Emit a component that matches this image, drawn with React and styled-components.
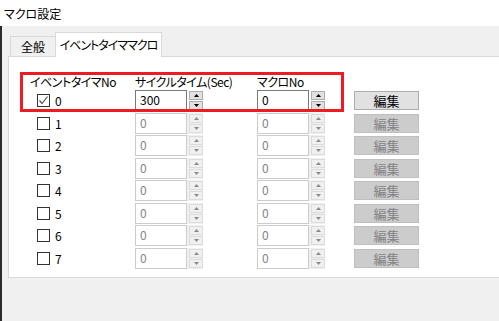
import React from 'react';
import styled, { createGlobalStyle } from 'styled-components';

const GlobalStyle = createGlobalStyle`
    body {
        margin: 0;
        background: #f0f0f0;
        font-family: 'Noto Sans CJK JP', 'Noto Sans', sans-serif;
        font-feature-settings: 'palt';
    }
`

const Window = styled.div`
    width: 499px;
    height: 321px;
    overflow: hidden;
    display: flex;
    flex-direction: column;
    background: #f0f0f0;
`
// タイトルバー
const TitleBar = styled.div`
    height: 26px;
    flex-shrink: 0;
    background: #ffffff;
    padding-left: 4px;
    display: flex;
    align-items: center;
    font-size: 12px;
    color: #000;
`
const Client = styled.div`
    flex: 1;
    border-left: 2px solid #2b2b2b;
    padding: 7px 0 0 6px;
    display: flex;
    flex-direction: column;
`
// タブ
const TabStrip = styled.div`
    height: 24px;
    display: flex;
    align-items: flex-end;
    padding-left: 2px;
    position: relative;
    z-index: 1;
    margin-bottom: -1px;
`
const Tab = styled.div`
    height: ${p => (p.$active ? '25px' : '21px')};
    box-sizing: border-box;
    width: ${p => p.$width}px;
    border: 1px solid #d9d9d9;
    border-bottom: ${p => (p.$active ? 'none' : '1px solid #d9d9d9')};
    margin-left: ${p => (p.$active ? '-1px' : '0')};
    background: ${p => (p.$active ? '#ffffff' : '#f0f0f0')};
    font-size: 12px;
    letter-spacing: ${p => (p.$active ? '-1px' : '0')};
    white-space: nowrap;
    display: flex;
    align-items: center;
    justify-content: center;
    padding-bottom: ${p => (p.$active ? '2px' : '0')};
`
const Panel = styled.div`
    width: 620px;
    height: 222px;
    box-sizing: border-box;
    background: #ffffff;
    border: 1px solid #d9d9d9;
    position: relative;
    padding: 17px 0 0 21px;
`
// 赤枠 (注釈)
const Highlight = styled.div`
    position: absolute;
    left: 11px;
    top: 15px;
    width: 324px;
    height: 40px;
    box-sizing: border-box;
    border: 3px solid #ed1c24;
    pointer-events: none;
`
const Grid = styled.div`
    display: grid;
    grid-template-columns: 105px 122px 97px 65px;
    grid-auto-rows: 21px;
    row-gap: 1.57px;
    align-items: center;
`
const HeaderRow = styled(Grid)`
    grid-auto-rows: 16px;
`
const HeaderCell = styled.div`
    font-size: 12px;
    line-height: 16px;
    letter-spacing: -0.5px;
    color: #000;
    white-space: nowrap;
`
const CheckCell = styled.label`
    display: flex;
    align-items: center;
    gap: 5px;
    padding-left: 7px;
    font-size: 12px;
    color: #000;
`
const CheckBox = styled.span`
    width: 13px;
    height: 13px;
    box-sizing: border-box;
    border: 1px solid #333333;
    background: #ffffff;
    display: flex;
    align-items: center;
    justify-content: center;
`
const Spin = styled.div`
    display: flex;
    height: 21px;
`
const TextBox = styled.div`
    width: 52px;
    height: 21px;
    box-sizing: border-box;
    border: 1px solid ${p => (p.$disabled ? '#cccccc' : '#7a7a7a')};
    padding: 1px 0 0 4px;
    font-size: 12px;
    line-height: 16px;
    color: ${p => (p.$disabled ? '#838383' : '#000')};
    background: #ffffff;
`
const SpinButtons = styled.div`
    width: 16px;
    box-sizing: border-box;
    padding: 1px 0 1px 2px;
    display: flex;
    flex-direction: column;
    gap: 1px;
    background: ${p => (p.$disabled ? '#f0f0f0' : '#ffffff')};
`
const SpinButton = styled.div`
    flex: 1;
    box-sizing: border-box;
    border: 1px solid ${p => (p.$disabled ? '#dcdcdc' : '#adadad')};
    background: ${p => (p.$disabled ? '#f0f0f0' : '#e1e1e1')};
    display: flex;
    align-items: center;
    justify-content: center;
`
const EditButton = styled.div`
    width: 65px;
    height: 19px;
    box-sizing: border-box;
    border: 1px solid ${p => (p.$disabled ? '#bfbfbf' : '#adadad')};
    background: ${p => (p.$disabled ? '#cccccc' : '#e1e1e1')};
    color: ${p => (p.$disabled ? '#838383' : '#000')};
    font-size: 13px;
    display: flex;
    align-items: center;
    justify-content: center;
`

function Arrow({ up, disabled }) {
    return (
        <svg width="5" height="3" viewBox="0 0 5 3">
            <polygon
                points={up ? '2.5,0 5,3 0,3' : '0,0 5,0 2.5,3'}
                fill={disabled ? '#8a8a8a' : '#000'}
            />
        </svg>
    )
}

function SpinBox({ value, disabled }) {
    return (
        <Spin>
            <TextBox $disabled={disabled}>{value}</TextBox>
            <SpinButtons $disabled={disabled}>
                <SpinButton $disabled={disabled}><Arrow up disabled={disabled} /></SpinButton>
                <SpinButton $disabled={disabled}><Arrow disabled={disabled} /></SpinButton>
            </SpinButtons>
        </Spin>
    )
}

const rows = [0, 1, 2, 3, 4, 5, 6, 7].map(n => ({
    no: n,
    checked: n === 0,
    cycle: n === 0 ? '300' : '0',
    macro: '0',
}))

export default function App() {
    return (
        <Window>
            <GlobalStyle />
            <TitleBar>マクロ設定</TitleBar>
            <Client>
                <TabStrip>
                    <Tab $width={46}>全般</Tab>
                    <Tab $active $width={107}>イベントタイママクロ</Tab>
                </TabStrip>
                <Panel>
                    <HeaderRow>
                        <HeaderCell>イベントタイマNo</HeaderCell>
                        <HeaderCell>サイクルタイム(Sec)</HeaderCell>
                        <HeaderCell>マクロNo</HeaderCell>
                        <div />
                    </HeaderRow>
                    <Grid>
                        {rows.map(r => (
                            <React.Fragment key={r.no}>
                                <CheckCell>
                                    <CheckBox>
                                        {r.checked && (
                                            <svg width="11" height="11" viewBox="0 0 11 11">
                                                <polyline points="1.5,5.5 4,8.5 9.5,1.5" fill="none" stroke="#555" strokeWidth="1.2" />
                                            </svg>
                                        )}
                                    </CheckBox>
                                    {r.no}
                                </CheckCell>
                                <SpinBox value={r.cycle} disabled={!r.checked} />
                                <SpinBox value={r.macro} disabled={!r.checked} />
                                <EditButton $disabled={!r.checked}>編集</EditButton>
                            </React.Fragment>
                        ))}
                    </Grid>
                    <Highlight />
                </Panel>
            </Client>
        </Window>
    )
}
